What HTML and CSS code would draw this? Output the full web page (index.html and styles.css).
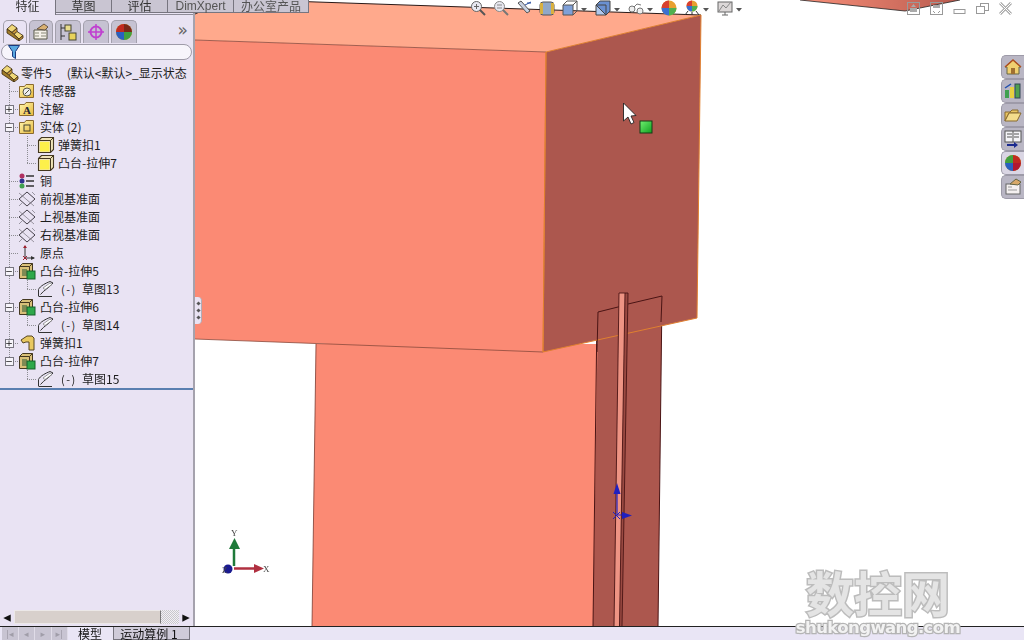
FILE: index.html
```html
<!DOCTYPE html>
<html lang="zh">
<head>
<meta charset="utf-8">
<title>零件5</title>
<link rel="stylesheet" href="styles.css">
</head>
<body>
<svg class="defs" width="0" height="0">
  <defs>
    <linearGradient id="gold" x1="0" y1="0" x2="1" y2="1"><stop offset="0" stop-color="#fff6b0"/><stop offset="1" stop-color="#e8b93c"/></linearGradient>
    <symbol id="part" viewBox="0 0 18 18">
      <g stroke="#3a2a10" stroke-width=".8" stroke-linejoin="round">
        <path d="M1 6 6 1.500 11 5 6 9.500z" fill="#f0d878"/>
        <path d="M6 9.500 11 5V8.500L8 11.500z" fill="#c89838"/>
        <path d="M8 11.500 11 8.500 17 12.500 13 16z" fill="#f0d878"/>
        <path d="M1 6V10L13 18V16L8 11.500 6 9.500z" fill="#a07c28"/>
        <path d="M13 16 17 12.500V15L13 18z" fill="#c89838"/>
      </g>
    </symbol>
    <symbol id="folder" viewBox="0 0 18 18"><path d="M1.500 4.500h5l1.500-2h7.500v13h-14z" fill="url(#gold)" stroke="#8a6a30"/></symbol>
    <symbol id="solid" viewBox="0 0 18 18"><path d="M1.500 4.500 4.500 1.500h12v12l-3 3h-12z" fill="#efe3b8" stroke="#443820" stroke-width="1.100"/><path d="M1.500 4.500h12v12M13.500 4.500l3-3" fill="none" stroke="#443820"/><rect x="3" y="6" width="9.500" height="9.500" fill="#fdf04a"/></symbol>
    <symbol id="plane" viewBox="0 0 18 18"><path d="M1 9 9 2l8 7-8 7z" fill="none" stroke="#45404a"/><path d="M1 3l15 13M1 16l3-3M14 2l3 3" fill="none" stroke="#77727c" stroke-width=".7"/></symbol>
    <symbol id="boss" viewBox="0 0 18 18"><path d="M1.500 4.500 4.500 1.500h10v12l-3 3h-10z" fill="#d9c078" stroke="#443820"/><path d="M1.500 4.500h10v12M11.500 4.500l3-3" fill="none" stroke="#443820"/><rect x="4" y="7" width="5" height="7" fill="#7e8a52"/><rect x="9" y="9" width="8" height="8" fill="#2ea84a" stroke="#16602a"/></symbol>
    <symbol id="sketch" viewBox="0 0 18 18"><path d="M1.500 16.500V9.500C3 6 9 3 13 1.500l3 1.500C12 8 7 10 3.500 14.500" fill="none" stroke="#333"/><path d="M2 16.500h13" stroke="#333"/><path d="M6 8 13 3l2 1.500-7 5z" fill="#fff" stroke="#777" stroke-width=".7"/></symbol>
    <symbol id="arrowdown" viewBox="0 0 6 4"><path d="M0 0h6L3 3.500z" fill="#555"/></symbol>
  </defs>
</svg>

<div class="app">
  <div class="main">
    <aside class="side">
      <div class="icon-tabs">
        <span class="itab active"><svg class="i18" viewBox="0 0 18 18"><use href="#part"/></svg></span>
        <span class="itab"><svg class="i18" viewBox="0 0 18 18"><path d="M2 7h13v9H2z" fill="#f4f0e8" stroke="#554"/><path d="M3 10h4M9 10h5M3 13h4M9 13h5" stroke="#887"/><path d="M5 6 12 1l4 3-3 3z" fill="#d8b070" stroke="#654"/></svg></span>
        <span class="itab wide"><svg class="i18" viewBox="0 0 18 18"><path d="M2 1v16" stroke="#333"/><path d="M2 5h4M2 13h4" stroke="#333"/><rect x="6" y="2" width="6" height="6" fill="#e8dc8c" stroke="#443"/><rect x="10" y="10" width="7" height="7" fill="#e8d25a" stroke="#443"/></svg></span>
        <span class="itab wide"><svg class="i18" viewBox="0 0 18 18"><circle cx="9" cy="9" r="5.500" fill="none" stroke="#c040d0" stroke-width="2"/><path d="M9 1v16M1 9h16" stroke="#c040d0" stroke-width="1.500"/></svg></span>
        <span class="itab wide"><svg class="i18" viewBox="0 0 18 18"><circle cx="9" cy="9" r="8" fill="#d8a020"/><path d="M9 1a8 8 0 0 0-8 8h8z" fill="#c02a20"/><path d="M9 1a8 8 0 0 1 8 8H9z" fill="#7a2818"/><path d="M1 9a8 8 0 0 0 8 8V9z" fill="#2a60c0"/><path d="M9 9v8a8 8 0 0 0 8-8z" fill="#40a040"/></svg></span>
        <span class="more">»</span>
      </div>
      <div class="filter">
        <svg class="funnel" viewBox="0 0 12 14"><path d="M.5.500h11L7.500 6.500v7l-3-2v-5z" fill="#58a8e0" stroke="#1a3a80"/></svg>
      </div>
      <div class="tree">
        <div class="row root"><svg class="i18" viewBox="0 0 18 18"><use href="#part"/></svg><span class="lbl">零件5</span><span class="lbl cfg">(默认&lt;默认&gt;_显示状态</span></div>
        <div class="row"><span class="gut"></span><svg class="i18" viewBox="0 0 18 18"><use href="#folder"/><circle cx="9" cy="10" r="4" fill="#eee" stroke="#554"/><path d="M7 12l4-4" stroke="#554"/></svg><span class="lbl">传感器</span></div>
        <div class="row"><span class="gut"><b class="exp">+</b></span><svg class="i18" viewBox="0 0 18 18"><use href="#folder"/><text x="5" y="14" class="ico-a">A</text></svg><span class="lbl">注解</span></div>
        <div class="row"><span class="gut"><b class="exp">−</b></span><svg class="i18" viewBox="0 0 18 18"><use href="#folder"/><rect x="6" y="7" width="6" height="6" fill="none" stroke="#443"/></svg><span class="lbl">实体 (2)</span></div>
        <div class="row"><span class="gut g2"></span><svg class="i18" viewBox="0 0 18 18"><use href="#solid"/></svg><span class="lbl">弹簧扣1</span></div>
        <div class="row"><span class="gut g2 last"></span><svg class="i18" viewBox="0 0 18 18"><use href="#solid"/></svg><span class="lbl">凸台-拉伸7</span></div>
        <div class="row"><span class="gut"></span><svg class="i18" viewBox="0 0 18 18"><circle cx="4" cy="4" r="2.500" fill="#b03060"/><circle cx="4" cy="9" r="2.500" fill="#303090"/><circle cx="4" cy="14" r="2.500" fill="#40a050"/><path d="M8 4h8M8 9h8M8 14h8" stroke="#333" stroke-width="1.500"/></svg><span class="lbl">铜</span></div>
        <div class="row"><span class="gut"></span><svg class="i18" viewBox="0 0 18 18"><use href="#plane"/></svg><span class="lbl">前视基准面</span></div>
        <div class="row"><span class="gut"></span><svg class="i18" viewBox="0 0 18 18"><use href="#plane"/></svg><span class="lbl">上视基准面</span></div>
        <div class="row"><span class="gut"></span><svg class="i18" viewBox="0 0 18 18"><use href="#plane"/></svg><span class="lbl">右视基准面</span></div>
        <div class="row"><span class="gut"></span><svg class="i18" viewBox="0 0 18 18"><path d="M7 2v12h9" fill="none" stroke="#333"/><path d="M5 4l2-3 2 3z" fill="#a02030"/><path d="M13 12l4 2-4 2z" fill="#333"/><path d="M5 12l4 4M9 12l-4 4" stroke="#a02030"/></svg><span class="lbl">原点</span></div>
        <div class="row"><span class="gut"><b class="exp">−</b></span><svg class="i18" viewBox="0 0 18 18"><use href="#boss"/></svg><span class="lbl">凸台-拉伸5</span></div>
        <div class="row"><span class="gut g2 last"></span><svg class="i18" viewBox="0 0 18 18"><use href="#sketch"/></svg><span class="lbl sk">(-)</span><span class="lbl">草图13</span></div>
        <div class="row"><span class="gut"><b class="exp">−</b></span><svg class="i18" viewBox="0 0 18 18"><use href="#boss"/></svg><span class="lbl">凸台-拉伸6</span></div>
        <div class="row"><span class="gut g2 last"></span><svg class="i18" viewBox="0 0 18 18"><use href="#sketch"/></svg><span class="lbl sk">(-)</span><span class="lbl">草图14</span></div>
        <div class="row"><span class="gut"><b class="exp">+</b></span><svg class="i18" viewBox="0 0 18 18"><path d="M3 6 9 2h5l2 2v12h-5V8H8L5 9z" fill="#e8c860" stroke="#554420"/></svg><span class="lbl">弹簧扣1</span></div>
        <div class="row"><span class="gut end"><b class="exp">−</b></span><svg class="i18" viewBox="0 0 18 18"><use href="#boss"/></svg><span class="lbl">凸台-拉伸7</span></div>
        <div class="row"><span class="gut g2 last solo"></span><svg class="i18" viewBox="0 0 18 18"><use href="#sketch"/></svg><span class="lbl sk">(-)</span><span class="lbl">草图15</span></div>
        <div class="rollback"></div>
      </div>
      <div class="hscroll">
        <span class="sbtn">◂</span><span class="thumb"></span><span class="track"></span><span class="sbtn">▸</span>
      </div>
    </aside>

    <div class="view">
      <svg class="scene" viewBox="195 0 829 626" width="829" height="626">
        <defs>
          <linearGradient id="sliver" x1="0" x2="1"><stop offset="0" stop-color="#f8907a"/><stop offset="1" stop-color="#b85a4e"/></linearGradient>
          <linearGradient id="green" x1="0" y1="0" x2="1" y2="1"><stop offset="0" stop-color="#70f070"/><stop offset="1" stop-color="#10a020"/></linearGradient>
        </defs>
        <path d="M800 0 905 11 960 0z" fill="url(#sliver)"/>
        <path d="M800 0 905 11 960 0" fill="none" stroke="#222" stroke-width=".8"/>
        <!-- lower column -->
        <path d="M316 344H601L597 626H312z" fill="#fb8a74"/>
        <path d="M316 344 312 626" fill="none" stroke="#7a3a30" stroke-width=".8"/>
        <path d="M598 312 662 296 658 626H593z" fill="#ac574e"/>
        <path d="M597 312 593 626M662 296 658 626M597 312 620 306M628 304 662 296" fill="none" stroke="#4a1414" stroke-width="1"/>
        <!-- top block -->
        <path d="M195 14 228-1 701 15 546 52 195 40z" fill="#ffa98c"/>
        <path d="M195 40 546 52 543 352 195 339z" fill="#fb8a74"/>
        <path d="M546 52 701 15 697 318 543 352z" fill="#ac574e"/>
        <path d="M195 14 228-1 701 15" fill="none" stroke="#2a1a18"/>
        <path d="M195 40 546 52M195 339 543 352" fill="none" stroke="#8a4a3c" stroke-width=".8"/>
        <path d="M546 52 701 15 697 318 543 352z" fill="none" stroke="#e08030" stroke-width="1"/>
        <path d="M546 52 543 352" fill="none" stroke="#e08030" stroke-width="1"/>
        <!-- slots over block -->
        <path d="M597 352 598 312 620 306.500M628 304 662 296 661 322" fill="none" stroke="#4a1414" stroke-width="1"/>
        <path d="M619 293h6L619.500 626H614z" fill="#ee9484"/>
        <path d="M625 293h3L622 626H619.500z" fill="#9a4a42"/>
        <path d="M619 293 614 626M628 293 622 626M619 293h9M625 293 619.500 626" fill="none" stroke="#4a1414" stroke-width=".9"/>
        <!-- reference triad -->
        <path d="M617 492V515" stroke="#2020c0" stroke-width="1.200"/>
        <path d="M613.500 494 617 483 620.500 494z" fill="#2020c0"/>
        <path d="M617 515h8" stroke="#2020c0"/><path d="M622 512l10 3.500-10 3.500z" fill="#2020c0"/>
        <path d="M613 512l7 7M620 512l-7 7" stroke="#2020c0"/>
        <!-- cursor and handle -->
        <path d="M623.500 103V121L628 117 631 124 634 122.500 631 116 636 115.500z" fill="#fff" stroke="#222" stroke-width=".9"/>
        <rect x="640" y="121" width="12" height="12" fill="url(#green)" stroke="#143a14"/>
        <!-- origin triad -->
        <path d="M234 566V545" stroke="#1f7a3a" stroke-width="2.500"/>
        <path d="M229 549 234.500 538 240 549z" fill="#1f7a3a"/>
        <path d="M234 568.500H256" stroke="#b03040" stroke-width="2.500"/>
        <path d="M254 564 264 568.500 254 573z" fill="#b03040"/>
        <circle cx="228" cy="569" r="4.500" fill="#1a1a90"/>
        <text x="231" y="536" class="ax">Y</text>
        <text x="263" y="572" class="ax">X</text>
        <text x="222" y="573" class="ax">Z</text>
      </svg>

      <div class="toolbar">
        <svg class="ti" viewBox="0 0 16 16"><circle cx="6.500" cy="6.500" r="5" fill="#e8e8f0" stroke="#666"/><path d="M10 10l5 5" stroke="#555" stroke-width="2"/><path d="M4 6.500h5M6.500 4v5" stroke="#666"/></svg>
        <svg class="ti" viewBox="0 0 16 16"><circle cx="6.500" cy="6.500" r="5" fill="#e8e8f0" stroke="#888"/><path d="M10 10l5 5" stroke="#777" stroke-width="2"/><path d="M4 5h5M4 8h5" stroke="#888"/></svg>
        <svg class="ti" viewBox="0 0 16 16"><path d="M2 3l9 10 3-2L5 1z" fill="#c8d0e0" stroke="#555"/><path d="M9 5l6-3M11 3h4" stroke="#2a50a0"/></svg>
        <svg class="ti" viewBox="0 0 16 16"><rect x="1" y="2" width="14" height="13" rx="3" fill="#90a8c8" stroke="#555"/><rect x="1" y="3" width="3" height="11" fill="#d8b040"/><rect x="12" y="3" width="3" height="11" fill="#d8b040"/></svg>
        <span class="tgroup"><svg class="ti" viewBox="0 0 16 16"><path d="M1 5h10v10H1z" fill="#7ea0d8" stroke="#555"/><path d="M1 5l4-4h10v10l-4 4M11 5l4-4" fill="none" stroke="#555"/></svg><svg class="tarrow"><use href="#arrowdown"/></svg></span>
        <span class="tgroup"><svg class="ti" viewBox="0 0 16 16"><path d="M1 5h10v10H1z" fill="#b0c8ec" stroke="#444"/><path d="M1 5l4-4h10v10l-4 4z" fill="#6a90d0" stroke="#444"/><path d="M1 5h10v10" fill="none" stroke="#444"/></svg><svg class="tarrow"><use href="#arrowdown"/></svg></span>
        <span class="tgroup"><svg class="ti" viewBox="0 0 16 16"><circle cx="4" cy="9" r="3" fill="#eee" stroke="#777"/><circle cx="12" cy="11" r="3" fill="#eee" stroke="#777"/><path d="M6 7l3-3 4 1" fill="none" stroke="#777"/></svg><svg class="tarrow"><use href="#arrowdown"/></svg></span>
        <svg class="ti" viewBox="0 0 16 16"><circle cx="8" cy="8" r="7.500" fill="#e8a030"/><path d="M8 8V.5A7.500 7.500 0 0 0 .5 8z" fill="#d84030"/><path d="M8 8H.5A7.500 7.500 0 0 0 8 15.500z" fill="#3a70d0"/><path d="M8 8v7.500A7.500 7.500 0 0 0 15.500 8z" fill="#50b050"/></svg>
        <span class="tgroup"><svg class="ti" viewBox="0 0 16 16"><circle cx="8" cy="6" r="5.500" fill="#e8a030"/><path d="M8 6V.5A5.500 5.500 0 0 0 2.500 6z" fill="#d84030"/><path d="M8 6H2.500A5.500 5.500 0 0 0 8 11.500z" fill="#3a70d0"/><path d="M8 6v5.500A5.500 5.500 0 0 0 13.500 6z" fill="#50b050"/><path d="M1 15l3-4M15 15l-3-4M8 12v3" stroke="#333"/></svg><svg class="tarrow"><use href="#arrowdown"/></svg></span>
        <span class="tgroup"><svg class="ti" viewBox="0 0 16 16"><rect x="1" y="2" width="14" height="10" fill="#dcd8d8" stroke="#666"/><path d="M2 11l4-6 3 3 5-6" fill="none" stroke="#888"/><path d="M5 15h6M8 12v3" stroke="#666"/></svg><svg class="tarrow"><use href="#arrowdown"/></svg></span>
      </div>

      <div class="winbtns">
        <svg class="wi" viewBox="0 0 13 13"><rect x=".5" y=".5" width="12" height="12" fill="none" stroke="#999"/><path d="M3 6h7v4H3zM4 5l2.500-3L9 5z" fill="#aaa"/></svg>
        <svg class="wi" viewBox="0 0 13 13"><rect x=".5" y=".5" width="12" height="12" fill="none" stroke="#999"/><path d="M3 3h7v3H3z" fill="#aaa"/><path d="M3 9l2 2M10 9l-2 2" stroke="#999"/></svg>
        <svg class="wi" viewBox="0 0 13 13"><rect x="1" y="7.500" width="11" height="4" fill="none" stroke="#999"/></svg>
        <svg class="wi" viewBox="0 0 13 13"><rect x="4.500" y="1.500" width="8" height="7" fill="none" stroke="#999"/><rect x=".5" y="4.500" width="8" height="7" fill="#fff" stroke="#999"/></svg>
        <svg class="wi" viewBox="0 0 13 13"><path d="M1 1l11 11M12 1 1 12" stroke="#aaa" stroke-width="3"/><path d="M1 1l11 11M12 1 1 12" stroke="#fff" stroke-width="1"/></svg>
      </div>

      <div class="taskpane">
        <span class="ptab"><svg class="i18" viewBox="0 0 18 18"><path d="M1 9 9 2l8 7h-2v7H3V9z" fill="#f0d070" stroke="#664"/><path d="M1 9 9 2l8 7" fill="none" stroke="#b05020" stroke-width="1.500"/><rect x="7" y="10" width="4" height="6" fill="#a07030"/></svg></span>
        <span class="ptab"><svg class="i18" viewBox="0 0 18 18"><rect x="1" y="8" width="4" height="8" fill="#40a050"/><rect x="6" y="5" width="4" height="11" fill="#e8d040"/><rect x="11" y="2" width="5" height="14" fill="#50a050" stroke="#345"/><path d="M1 6l6-4" stroke="#2050b0" stroke-width="1.500"/></svg></span>
        <span class="ptab"><svg class="i18" viewBox="0 0 18 18"><path d="M1 6h5l2-2h6v3H5L1 15z" fill="#e8c460" stroke="#886a30"/><path d="M5 7h12l-4 8H1z" fill="#f4dc8c" stroke="#886a30"/></svg></span>
        <span class="ptab"><svg class="i18" viewBox="0 0 18 18"><rect x="1" y="1" width="16" height="11" fill="#f4f4f8" stroke="#555"/><path d="M3 4h5M3 7h5M10 4h5M10 7h5M9 1v11" stroke="#555"/><path d="M3 15h9" stroke="#1a2a90" stroke-width="2"/><path d="M10 12l4 3-4 3z" fill="#1a2a90"/></svg></span>
        <span class="ptab on"><svg class="i18" viewBox="0 0 18 18"><circle cx="9" cy="9" r="8" fill="#d8a020"/><path d="M9 1a8 8 0 0 0-8 8h8z" fill="#40a040"/><path d="M9 1a8 8 0 0 1 8 8H9z" fill="#c02a20"/><path d="M1 9a8 8 0 0 0 8 8V9z" fill="#2a60c0"/><path d="M9 9v8a8 8 0 0 0 8-8z" fill="#b01830"/></svg></span>
        <span class="ptab"><svg class="i18" viewBox="0 0 18 18"><rect x="2" y="6" width="14" height="10" fill="#f4f0f0" stroke="#666"/><path d="M4 9h4M4 12h9" stroke="#999"/><path d="M6 6 12 1l5 3-3 3z" fill="#d8a868" stroke="#664"/></svg></span>
      </div>

      <div class="grip"><i></i><i></i><i></i></div>
    </div>
  </div>

  <footer class="bottom">
    <div class="navs"><span>|◂</span><span>◂</span><span>▸</span><span>▸|</span></div>
    <span class="btab cur">模型</span>
    <span class="btab">运动算例 1</span>
  </footer>

  <nav class="tabs">
    <span class="tab active">特征</span>
    <span class="tab">草图</span>
    <span class="tab">评估</span>
    <span class="tab narrow">DimXpert</span>
    <span class="tab office">办公室产品</span>
  </nav>

  <div class="mark">
    <div class="mark-cn">数控网</div>
    <div class="mark-en">shukongwang.com</div>
  </div>
</div>
</body>
</html>
```

FILE: styles.css
```css
* { box-sizing: border-box; }

html, body {
  margin: 0;
  height: 100%;
  overflow: hidden;
  background: #fff;
}

body {
  font-family: "Noto Sans CJK SC", "Liberation Sans", sans-serif;
  font-size: 12px;
  color: #222;
}

.defs { display: block; height: 0; }

.app {
  position: relative;
  width: 1024px;
  height: 640px;
  display: flex;
  flex-direction: column;
  filter: blur(0.35px);
}

.main {
  flex: 1;
  display: flex;
  min-height: 0;
}

/* Feature manager */
.side {
  width: 195px;
  flex: none;
  display: flex;
  flex-direction: column;
  padding-top: 14px;
  background: #e9e3f3;
  border-right: 2px solid #a5a2ad;
}

.i18 { width: 18px; height: 18px; flex: none; display: block; }

.icon-tabs {
  height: 30px;
  display: flex;
  align-items: flex-end;
  gap: 2px;
  padding: 5px 0 1px 3px;
  border-top: 1px solid #8f8c98;
}

.itab {
  width: 24px;
  height: 23px;
  display: flex;
  align-items: center;
  justify-content: center;
  background: #c6c2d2;
  border: 1px solid #a3a0ac;
  border-bottom: 0;
  border-radius: 5px 5px 0 0;
}

.itab.wide { width: 26px; }
.itab.active { background: #e9e3f3; }

.more {
  margin-left: auto;
  margin-right: 5px;
  height: 22px;
  font: 17px/18px "DejaVu Sans", sans-serif;
  color: #666;
}

.filter {
  height: 16px;
  margin: 0 1px;
  padding-left: 6px;
  display: flex;
  align-items: center;
  background: #f7f5fb;
  border: 1px solid #9e9ba8;
  border-radius: 8px;
}

.funnel { width: 12px; height: 14px; }

.tree {
  flex: 1;
  padding-top: 4px;
  min-height: 0;
}

.row {
  height: 18px;
  display: flex;
  align-items: center;
}

.row.root { padding-left: 1px; gap: 1px; }

.lbl {
  line-height: 18px;
  white-space: nowrap;
  margin-left: 4px;
  color: #1c1c1c;
}

.root .lbl { margin-left: 1px; }
.root .lbl.cfg { margin-left: 14px; }

.gut.g2 ~ .lbl { margin-left: 3px; }
.gut.g2 ~ .lbl.sk {
  width: 18px;
  margin-left: 6px;
  font-size: 11px;
  letter-spacing: 1.500px;
}

.gut {
  position: relative;
  width: 18px;
  height: 18px;
  flex: none;
  display: flex;
  align-items: center;
  justify-content: center;
  background:
    repeating-linear-gradient(180deg, #8d8d92 0 1px, transparent 1px 2px) 9px 0 / 1px 100% no-repeat,
    repeating-linear-gradient(90deg, #8d8d92 0 1px, transparent 1px 2px) 9px 9px / 9px 1px no-repeat;
}

.gut.end {
  background:
    repeating-linear-gradient(180deg, #8d8d92 0 1px, transparent 1px 2px) 9px 0 / 1px 9px no-repeat,
    repeating-linear-gradient(90deg, #8d8d92 0 1px, transparent 1px 2px) 9px 9px / 9px 1px no-repeat;
}

.gut.g2 {
  width: 37px;
  background:
    repeating-linear-gradient(180deg, #8d8d92 0 1px, transparent 1px 2px) 9px 0 / 1px 100% no-repeat,
    repeating-linear-gradient(180deg, #8d8d92 0 1px, transparent 1px 2px) 27px 0 / 1px 100% no-repeat,
    repeating-linear-gradient(90deg, #8d8d92 0 1px, transparent 1px 2px) 27px 9px / 10px 1px no-repeat;
}

.gut.g2.last {
  background:
    repeating-linear-gradient(180deg, #8d8d92 0 1px, transparent 1px 2px) 9px 0 / 1px 100% no-repeat,
    repeating-linear-gradient(180deg, #8d8d92 0 1px, transparent 1px 2px) 27px 0 / 1px 9px no-repeat,
    repeating-linear-gradient(90deg, #8d8d92 0 1px, transparent 1px 2px) 27px 9px / 10px 1px no-repeat;
}

.gut.g2.last.solo {
  background:
    repeating-linear-gradient(180deg, #8d8d92 0 1px, transparent 1px 2px) 27px 0 / 1px 9px no-repeat,
    repeating-linear-gradient(90deg, #8d8d92 0 1px, transparent 1px 2px) 27px 9px / 10px 1px no-repeat;
}

.exp {
  width: 9px;
  height: 9px;
  display: flex;
  align-items: center;
  justify-content: center;
  background: #f6f4fa;
  border: 1px solid #77757f;
  font: 9px/7px "DejaVu Sans", sans-serif;
  color: #111;
}

.rollback {
  height: 2px;
  background: #5a7fb0;
}

.hscroll {
  height: 14px;
  margin: 0 0 2px;
  display: flex;
  background: #e9e3f3;
}

.sbtn {
  width: 14px;
  display: flex;
  align-items: center;
  justify-content: center;
  font: 15px/14px "DejaVu Sans", sans-serif;
  color: #111;
  background: #e9e3f3;
}

.thumb {
  width: 147px;
  background: #d8d0cc;
  border: 1px solid #ece8e8;
  border-right: 1px solid #777;
}

.track {
  flex: 1;
  background: repeating-conic-gradient(#c8c8cc 0 25%, #f2f0f4 0 50%) 0 0 / 2px 2px;
}

/* Graphics area */
.view {
  position: relative;
  flex: 1;
  min-width: 0;
  background: #fff;
  overflow: hidden;
}

.scene {
  position: absolute;
  left: 0;
  top: 0;
  display: block;
}

.ax {
  font: 9px "Liberation Serif", serif;
  fill: #444;
}

.ico-a {
  font: bold 11px "Liberation Serif", serif;
  fill: #223;
}

.toolbar {
  position: absolute;
  left: 275px;
  top: 0;
  display: flex;
  align-items: center;
  gap: 7px;
  height: 16px;
}

.ti { width: 16px; height: 16px; flex: none; display: block; }

.tgroup {
  display: flex;
  align-items: center;
  gap: 3px;
  margin-right: 1px;
}

.tarrow { width: 6px; height: 4px; margin-top: 3px; }

.winbtns {
  position: absolute;
  right: 12px;
  top: 2px;
  display: flex;
  align-items: center;
  gap: 10px;
}

.wi { width: 13px; height: 13px; display: block; }

.taskpane {
  position: absolute;
  right: 0;
  top: 55px;
  display: flex;
  flex-direction: column;
}

.ptab {
  width: 23px;
  height: 24px;
  display: flex;
  align-items: center;
  justify-content: center;
  background: #b9b6c4;
  border: 1px solid #9d9aa8;
  border-right: 0;
  border-radius: 5px 0 0 5px;
}

.ptab.on { background: #dad6e4; }

.grip {
  position: absolute;
  left: 0;
  top: 297px;
  width: 7px;
  height: 27px;
  display: flex;
  flex-direction: column;
  align-items: center;
  justify-content: center;
  gap: 4px;
  background: #e9e3f3;
  border-radius: 0 4px 4px 0;
  border-right: 1px solid #b0adb8;
}

.grip i {
  width: 3px;
  height: 3px;
  background: #555;
  transform: rotate(45deg);
}

/* Bottom bar */
.bottom {
  height: 14px;
  flex: none;
  display: flex;
  align-items: stretch;
  padding-left: 2px;
  background: #e9e5f5;
  border-top: 1px solid #222;
}

.navs {
  width: 66px;
  display: flex;
  background: #c8c4d2;
}

.navs span {
  flex: 1;
  display: flex;
  align-items: center;
  justify-content: center;
  font: 9px/12px "DejaVu Sans", sans-serif;
  color: #a09da8;
  border-right: 1px solid #e0dce8;
}

.btab {
  width: 44px;
  display: flex;
  align-items: center;
  justify-content: center;
  line-height: 13px;
  color: #111;
  background: #cfcbd9;
  border: 1px solid #77757f;
  border-top: 0;
}

.btab.cur { background: #e9e5f5; border: 0; }
.btab:last-child { width: 77px; margin-left: 1px; padding-right: 5px; }

/* Top tabs */
.tabs {
  position: absolute;
  left: 0;
  top: 0;
  display: flex;
  height: 15px;
  align-items: flex-start;
}

.tab {
  width: 56px;
  height: 13px;
  display: flex;
  align-items: flex-start;
  justify-content: center;
  line-height: 12px;
  color: #333;
  background: #c9c5d2;
  border: 1px solid #77757f;
  border-top: 0;
  border-left: 0;
}

.tab.active {
  background: #e9e3f3;
  height: 15px;
  border-bottom: 0;
}

.tab.narrow { width: 66px; color: #555; font-family: "Liberation Sans", sans-serif; }
.tab.office { width: 75px; color: #555; }

/* Watermark */
.mark {
  position: absolute;
  left: 795px;
  top: 566px;
  width: 166px;
  display: flex;
  flex-direction: column;
  align-items: center;
  pointer-events: none;
}

.mark-cn {
  height: 52px;
  font-size: 48px;
  font-weight: 700;
  line-height: 50px;
  color: #e4e4e4;
  -webkit-text-stroke: 3px #bcbcbc;
  paint-order: stroke fill;
}

.mark-en {
  font: bold 16.500px/20px "DejaVu Sans", sans-serif;
  letter-spacing: -.6px;
  color: #f2f2f2;
  -webkit-text-stroke: 2.500px #b4b4b4;
  paint-order: stroke fill;
}
```
